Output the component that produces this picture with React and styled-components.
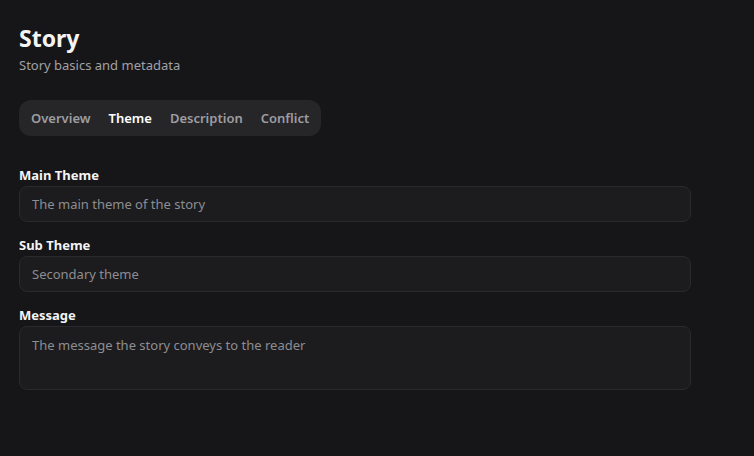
import React, { useState } from 'react';
import styled, { createGlobalStyle } from 'styled-components';

const GlobalStyle = createGlobalStyle`
  html, body {
    margin: 0;
    padding: 0;
    background: #161618;
  }
  body {
    font-family: "Segoe UI", "Noto Sans", "Open Sans", sans-serif;
    color: #f2f2f2;
  }
  * { box-sizing: border-box; }
`;

const Page = styled.div`
  min-height: 456px;
  padding: 22px 63px 0 19px;
`;

const Header = styled.div`
  margin-bottom: 26px;

  h1 {
    margin: 0;
    font-size: 23px;
    font-weight: 700;
    line-height: 32px;
    color: #f4f4f5;
  }

  p {
    margin: 2px 0 0;
    font-size: 13px;
    line-height: 18px;
    color: #a1a1a6;
  }
`;

const Tabs = styled.div`
  display: inline-flex;
  align-items: center;
  height: 36px;
  padding: 0 3px;
  background: #262628;
  border-radius: 12px;
  margin-bottom: 30px;
`;

const Tab = styled.button`
  border: none;
  background: none;
  padding: 0 9px;
  height: 30px;
  font-family: inherit;
  font-size: 13px;
  font-weight: 600;
  color: ${p => (p.$active ? '#ffffff' : '#9d9da2')};
  cursor: pointer;
`;

const Form = styled.div`
  display: flex;
  flex-direction: column;
  gap: 14px;
`;

const Field = styled.label`
  display: flex;
  flex-direction: column;
  gap: 2px;

  span {
    font-size: 13px;
    font-weight: 700;
    line-height: 18px;
    color: #f4f4f5;
  }
`;

const Input = styled.input`
  height: 36px;
  width: 100%;
  padding: 0 12px;
  background: #1c1c1e;
  border: 1px solid #2a2a2c;
  border-radius: 8px;
  font-family: inherit;
  font-size: 13px;
  color: #e4e4e7;
  outline: none;

  &::placeholder { color: #8d8d92; }
`;

const TextArea = styled.textarea`
  height: 64px;
  width: 100%;
  padding: 9px 12px;
  background: #1c1c1e;
  border: 1px solid #2a2a2c;
  border-radius: 8px;
  font-family: inherit;
  font-size: 13px;
  line-height: 18px;
  color: #e4e4e7;
  outline: none;
  resize: none;

  &::placeholder { color: #8d8d92; }
`;

const tabs = ['Overview', 'Theme', 'Description', 'Conflict'];

export default function App() {
  const [active, setActive] = useState('Theme');

  return (
    <Page>
      <GlobalStyle />
      <Header>
        <h1>Story</h1>
        <p>Story basics and metadata</p>
      </Header>

      <Tabs>
        {tabs.map(t => (
          <Tab key={t} $active={t === active} onClick={() => setActive(t)}>
            {t}
          </Tab>
        ))}
      </Tabs>

      <Form>
        <Field>
          <span>Main Theme</span>
          <Input placeholder="The main theme of the story" />
        </Field>
        <Field>
          <span>Sub Theme</span>
          <Input placeholder="Secondary theme" />
        </Field>
        <Field>
          <span>Message</span>
          <TextArea placeholder="The message the story conveys to the reader" />
        </Field>
      </Form>
    </Page>
  );
}
